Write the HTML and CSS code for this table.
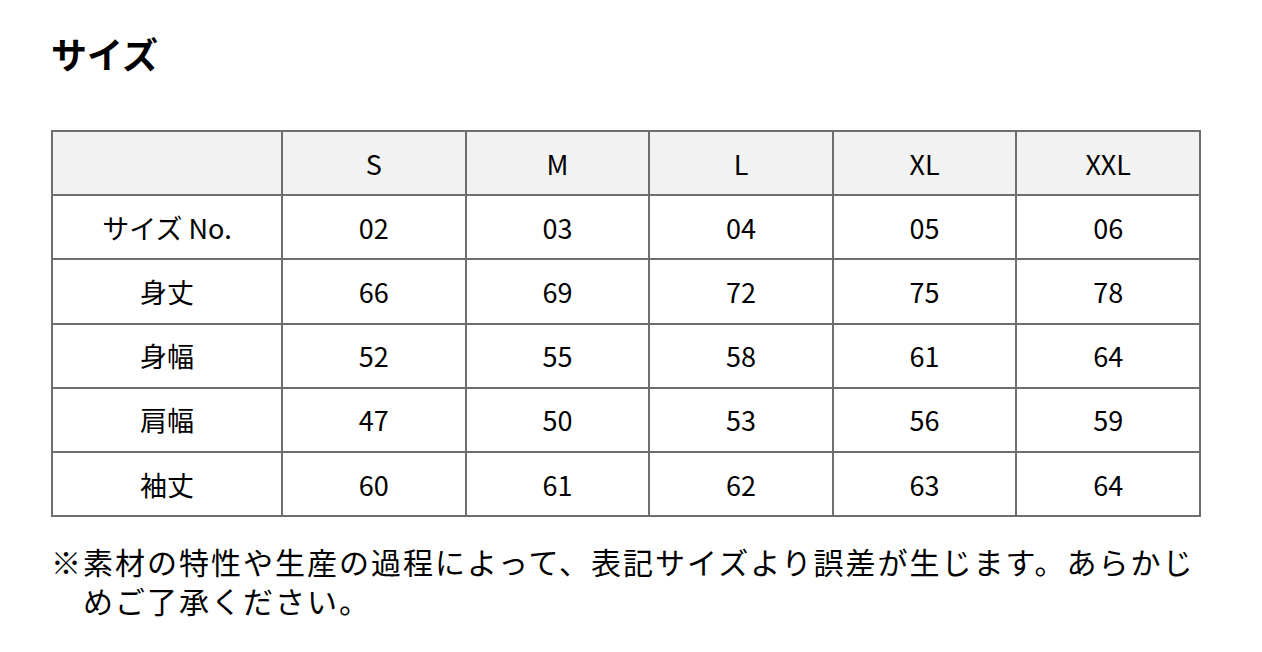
FILE: index.html
```html
<!DOCTYPE html>
<html lang="ja">
<head>
<meta charset="utf-8">
<link rel="stylesheet" href="styles.css">
</head>
<body>
<div class="page">
  <h2 class="title">サイズ</h2>
  <table class="size-table">
    <thead>
      <tr><th class="label-col"></th><th>S</th><th>M</th><th>L</th><th>XL</th><th>XXL</th></tr>
    </thead>
    <tbody>
      <tr><td>サイズ No.</td><td>02</td><td>03</td><td>04</td><td>05</td><td>06</td></tr>
      <tr><td>身丈</td><td>66</td><td>69</td><td>72</td><td>75</td><td>78</td></tr>
      <tr><td>身幅</td><td>52</td><td>55</td><td>58</td><td>61</td><td>64</td></tr>
      <tr><td>肩幅</td><td>47</td><td>50</td><td>53</td><td>56</td><td>59</td></tr>
      <tr><td>袖丈</td><td>60</td><td>61</td><td>62</td><td>63</td><td>64</td></tr>
    </tbody>
  </table>
  <p class="note">※素材の特性や生産の過程によって、表記サイズより誤差が生じます。あらかじめご了承ください。</p>
</div>
</body>
</html>
```
FILE: styles.css
```css
html, body {
  margin: 0;
  padding: 0;
  background: #fff;
  color: #000;
  font-family: "Noto Sans CJK JP", "Noto Sans", sans-serif;
}
.page {
  width: 1150px;
  padding: 27px 0 0 51px;
}
.title {
  margin: 0;
  font-size: 36px;
  font-weight: 700;
  line-height: 52px;
}
.size-table {
  margin-top: 51px;
  width: 1150px;
  border-collapse: collapse;
  table-layout: fixed;
  font-size: 27px;
}
.size-table th,
.size-table td {
  border: 2px solid #6e6e6e;
  height: 62.2px;
  padding: 0;
  text-align: center;
  vertical-align: middle;
  font-weight: 400;
  line-height: 1;
}
.size-table th.label-col { width: 228px; }
.size-table thead th { background: #f2f2f2; }
.note {
  margin: 25px 0 0;
  font-size: 30px;
  line-height: 39px;
  letter-spacing: 2px;
  padding-left: calc(1em + 2px);
  text-indent: calc(-1em - 2px);
}
```
